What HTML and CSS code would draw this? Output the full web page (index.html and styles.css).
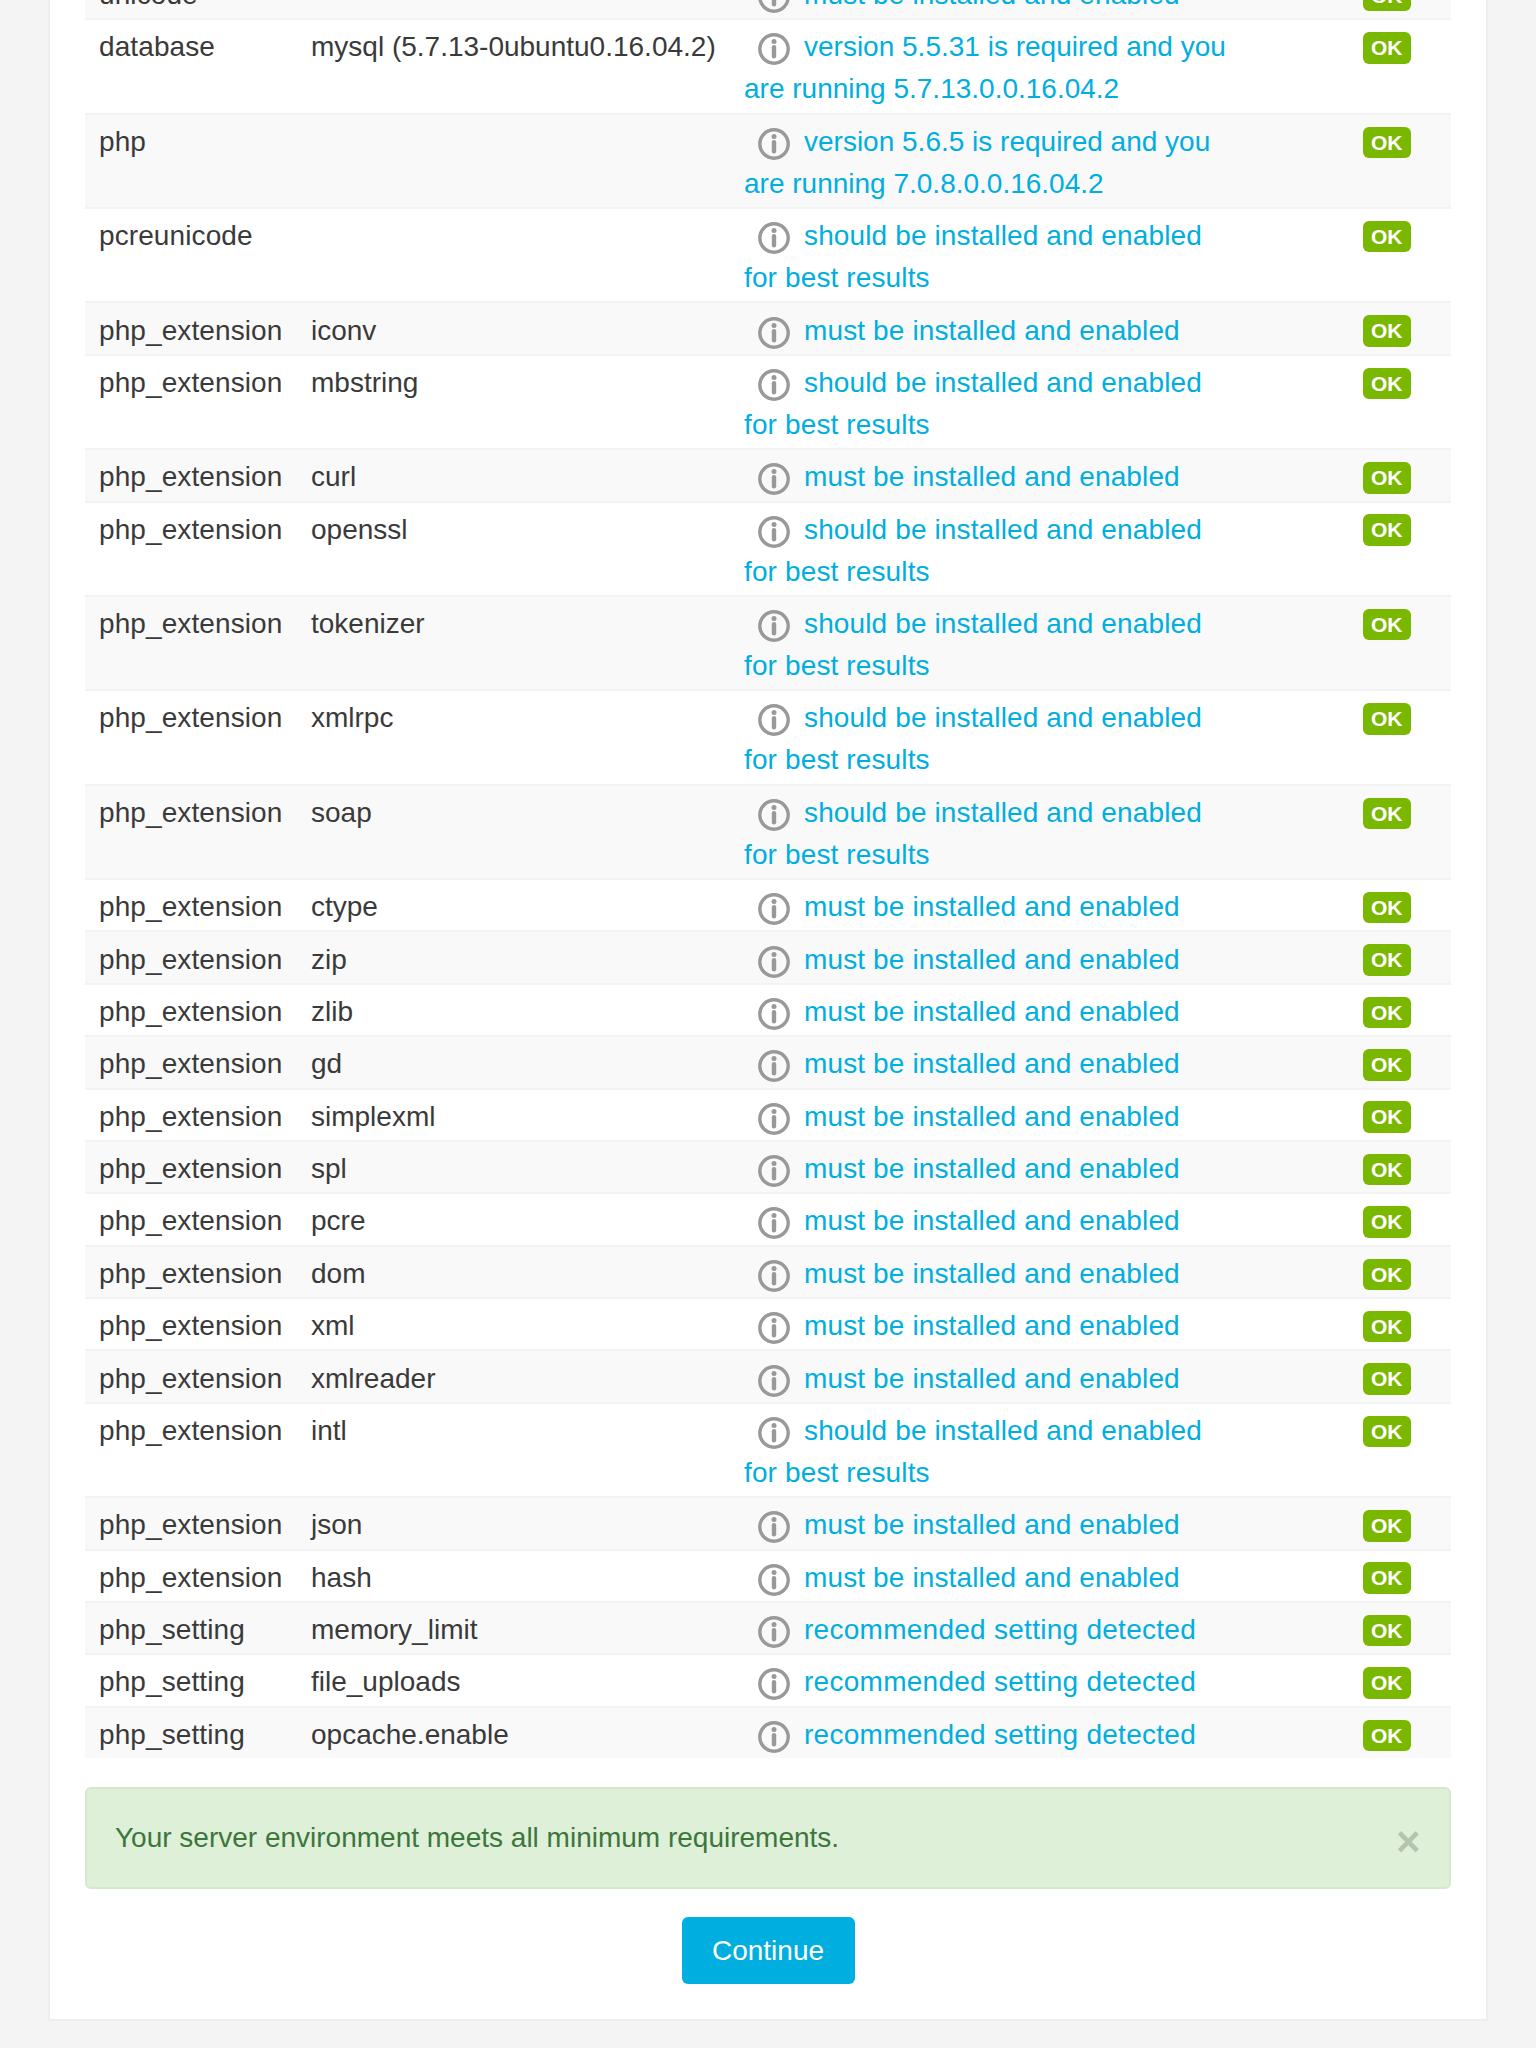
FILE: index.html
```html
<!DOCTYPE html>
<html lang="en">
<head>
<meta charset="utf-8">
<title>Server environment</title>
<link rel="stylesheet" href="styles.css">
</head>
<body>
<svg class="defs" aria-hidden="true"><symbol id="info" viewBox="0 0 32 32"><circle cx="16" cy="16" r="14.2" fill="none" stroke="currentColor" stroke-width="3.4"/><circle cx="16" cy="8.4" r="2.5" fill="currentColor"/><rect x="13.8" y="12" width="4.4" height="13.4" rx="2.2" fill="currentColor"/></symbol></svg>
<main class="card">
<table class="checks">
<tbody>
<tr><td>unicode</td><td></td><td class="msg"><svg class="info"><use href="#info"/></svg>must be installed and enabled</td><td><span class="ok">OK</span></td></tr>
<tr><td>database</td><td>mysql (5.7.13-0ubuntu0.16.04.2)</td><td class="msg version"><svg class="info"><use href="#info"/></svg>version 5.5.31 is required and you are running 5.7.13.0.0.16.04.2</td><td><span class="ok">OK</span></td></tr>
<tr><td>php</td><td></td><td class="msg version"><svg class="info"><use href="#info"/></svg>version 5.6.5 is required and you are running 7.0.8.0.0.16.04.2</td><td><span class="ok">OK</span></td></tr>
<tr><td>pcreunicode</td><td></td><td class="msg"><svg class="info"><use href="#info"/></svg>should be installed and enabled for best results</td><td><span class="ok">OK</span></td></tr>
<tr><td>php_extension</td><td>iconv</td><td class="msg"><svg class="info"><use href="#info"/></svg>must be installed and enabled</td><td><span class="ok">OK</span></td></tr>
<tr><td>php_extension</td><td>mbstring</td><td class="msg"><svg class="info"><use href="#info"/></svg>should be installed and enabled for best results</td><td><span class="ok">OK</span></td></tr>
<tr><td>php_extension</td><td>curl</td><td class="msg"><svg class="info"><use href="#info"/></svg>must be installed and enabled</td><td><span class="ok">OK</span></td></tr>
<tr><td>php_extension</td><td>openssl</td><td class="msg"><svg class="info"><use href="#info"/></svg>should be installed and enabled for best results</td><td><span class="ok">OK</span></td></tr>
<tr><td>php_extension</td><td>tokenizer</td><td class="msg"><svg class="info"><use href="#info"/></svg>should be installed and enabled for best results</td><td><span class="ok">OK</span></td></tr>
<tr><td>php_extension</td><td>xmlrpc</td><td class="msg"><svg class="info"><use href="#info"/></svg>should be installed and enabled for best results</td><td><span class="ok">OK</span></td></tr>
<tr><td>php_extension</td><td>soap</td><td class="msg"><svg class="info"><use href="#info"/></svg>should be installed and enabled for best results</td><td><span class="ok">OK</span></td></tr>
<tr><td>php_extension</td><td>ctype</td><td class="msg"><svg class="info"><use href="#info"/></svg>must be installed and enabled</td><td><span class="ok">OK</span></td></tr>
<tr><td>php_extension</td><td>zip</td><td class="msg"><svg class="info"><use href="#info"/></svg>must be installed and enabled</td><td><span class="ok">OK</span></td></tr>
<tr><td>php_extension</td><td>zlib</td><td class="msg"><svg class="info"><use href="#info"/></svg>must be installed and enabled</td><td><span class="ok">OK</span></td></tr>
<tr><td>php_extension</td><td>gd</td><td class="msg"><svg class="info"><use href="#info"/></svg>must be installed and enabled</td><td><span class="ok">OK</span></td></tr>
<tr><td>php_extension</td><td>simplexml</td><td class="msg"><svg class="info"><use href="#info"/></svg>must be installed and enabled</td><td><span class="ok">OK</span></td></tr>
<tr><td>php_extension</td><td>spl</td><td class="msg"><svg class="info"><use href="#info"/></svg>must be installed and enabled</td><td><span class="ok">OK</span></td></tr>
<tr><td>php_extension</td><td>pcre</td><td class="msg"><svg class="info"><use href="#info"/></svg>must be installed and enabled</td><td><span class="ok">OK</span></td></tr>
<tr><td>php_extension</td><td>dom</td><td class="msg"><svg class="info"><use href="#info"/></svg>must be installed and enabled</td><td><span class="ok">OK</span></td></tr>
<tr><td>php_extension</td><td>xml</td><td class="msg"><svg class="info"><use href="#info"/></svg>must be installed and enabled</td><td><span class="ok">OK</span></td></tr>
<tr><td>php_extension</td><td>xmlreader</td><td class="msg"><svg class="info"><use href="#info"/></svg>must be installed and enabled</td><td><span class="ok">OK</span></td></tr>
<tr><td>php_extension</td><td>intl</td><td class="msg"><svg class="info"><use href="#info"/></svg>should be installed and enabled for best results</td><td><span class="ok">OK</span></td></tr>
<tr><td>php_extension</td><td>json</td><td class="msg"><svg class="info"><use href="#info"/></svg>must be installed and enabled</td><td><span class="ok">OK</span></td></tr>
<tr><td>php_extension</td><td>hash</td><td class="msg"><svg class="info"><use href="#info"/></svg>must be installed and enabled</td><td><span class="ok">OK</span></td></tr>
<tr><td>php_setting</td><td>memory_limit</td><td class="msg setting"><svg class="info"><use href="#info"/></svg>recommended setting detected</td><td><span class="ok">OK</span></td></tr>
<tr><td>php_setting</td><td>file_uploads</td><td class="msg setting"><svg class="info"><use href="#info"/></svg>recommended setting detected</td><td><span class="ok">OK</span></td></tr>
<tr><td>php_setting</td><td>opcache.enable</td><td class="msg setting"><svg class="info"><use href="#info"/></svg>recommended setting detected</td><td><span class="ok">OK</span></td></tr>
</tbody>
</table>
<div class="alert"><span>Your server environment meets all minimum requirements.</span><span class="close">×</span></div>
<div class="actions"><a class="btn" href="#">Continue</a></div>
</main>
</body>
</html>
```
FILE: styles.css
```css
* { box-sizing: border-box; }
html, body { margin: 0; height: 2048px; overflow: hidden; }
body {
  display: flex;
  flex-direction: column;
  justify-content: flex-end;
  padding: 0 48px 27px;
  background: #f4f4f4;
  color: #3a3a3a;
  font: 28px/42px "Liberation Sans", Arial, sans-serif;
}
.defs { display: none; }
.card {
  flex: none;
  background: #fff;
  border: 2px solid #eee;
  border-top: 0;
  padding: 0 35px 35px;
}
.checks {
  width: 100%;
  table-layout: fixed;
  border-collapse: separate;
  border-spacing: 0;
}
.checks td {
  padding: 6.19px 14px 2.19px;
  border-top: 2px solid #f3f3f3;
  vertical-align: top;
}
.checks tr:nth-child(odd) td { background: #f9f9f9; }
.checks td:nth-child(1) { width: 212px; letter-spacing: .1px; }
.checks td:nth-child(2) { width: 433px; }
.checks td:nth-child(3) { width: 619px; padding-right: 113px; }
.checks td:nth-child(4) { width: 102px; }
.checks .msg { color: #00aee0; letter-spacing: .13px; }
.checks .version { letter-spacing: 0; }
.checks .setting { letter-spacing: .27px; }
.info {
  width: 32px;
  height: 32px;
  margin: 0 14px;
  color: #999;
  vertical-align: -9px;
}
.ok {
  display: inline-block;
  padding: 5px 8px;
  margin-top: 5.8px;
  border-radius: 6px;
  background: #7ab800;
  color: #fff;
  font-size: 21px;
  font-weight: 700;
  line-height: 21.5px;
  letter-spacing: 0;
  vertical-align: top;
}
.alert {
  display: flex;
  justify-content: space-between;
  margin-top: 29px;
  padding: 28px;
  border: 2px solid #d3e9c9;
  border-radius: 6px;
  background: #dff0d8;
  color: #3c763d;
}
.close {
  color: rgba(0, 0, 0, .2);
  font-size: 42px;
  font-weight: 700;
  line-height: 42px;
  margin: 4px .5px -4px 0;
}
.actions {
  display: flex;
  justify-content: center;
  margin-top: 28px;
}
.btn {
  width: 173px;
  padding: 12.5px 0;
  border-radius: 6px;
  background: #00aee0;
  color: #fff;
  text-align: center;
  text-decoration: none;
}
```
